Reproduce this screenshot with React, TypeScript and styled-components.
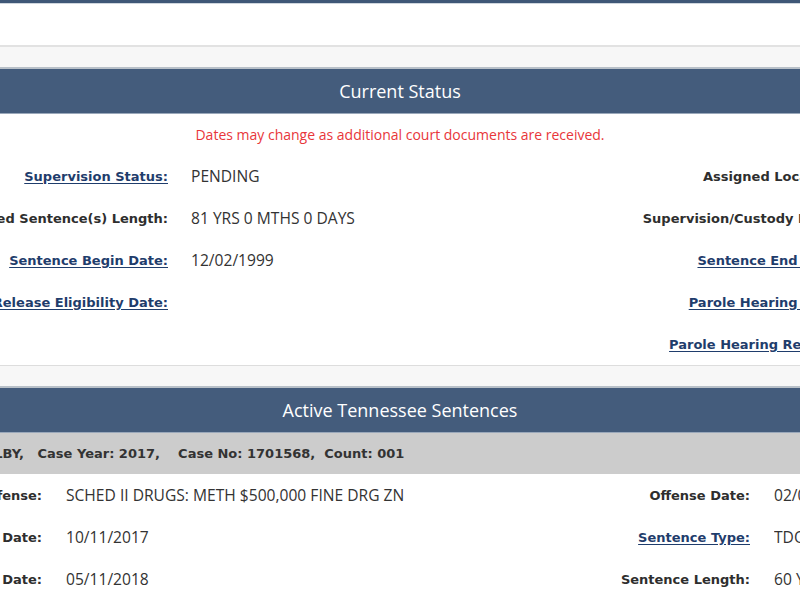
import React from 'react';
import styled, {createGlobalStyle} from 'styled-components';

const GlobalStyle = createGlobalStyle`
  html, body {
    margin: 0;
    padding: 0;
    overflow: hidden;
    background: #f7f7f7;
  }
`;

const Page = styled.div`
  width: 1348px;
  margin-left: calc(50% - 674px);
  display: flex;
  flex-direction: column;
  gap: 20px;
`;

const TopPanel = styled.div`
  height: 42px;
  background: #fff;
  border-top: 3px solid #3f5777;
  border-bottom: 2px solid #e2e2e2;
  box-shadow: inset 0 1px 0 #cfd6de;
`;

const Panel = styled.section`
  background: #fff;
  border-top: 2px solid #b8c0c8;
  border-bottom: 1px solid #dddddd;
`;

const PanelHeader = styled.h2`
  margin: 0;
  height: 44px;
  display: flex;
  align-items: center;
  justify-content: center;
  background: #445c7c;
  border-bottom: 1px solid #9aa8ba;
  color: #fff;
  font-family: "Open Sans", sans-serif;
  font-size: 18px;
  font-weight: 400;
`;

const Note = styled.div`
  height: 41px;
  display: flex;
  align-items: center;
  justify-content: center;
  color: #e8363a;
  font-family: "Open Sans", sans-serif;
  font-size: 14px;
`;

const CaseBand = styled.div`
  height: 41px;
  display: flex;
  align-items: center;
  padding-left: 96px;
  background: #cccccc;
  color: #333;
  font-family: "DejaVu Sans", sans-serif;
  font-size: 13px;
  font-weight: 700;
  white-space: pre;
`;

const Row = styled.div<{ $cols: string }>`
  display: grid;
  grid-template-columns: ${p => p.$cols};
  height: 42px;
  align-items: center;
`;

const Label = styled.div<{ $gap: number }>`
  text-align: right;
  padding-right: ${p => p.$gap}px;
  color: #2e2e2e;
  font-family: "DejaVu Sans", sans-serif;
  font-size: 13px;
  font-weight: 700;
  white-space: nowrap;
  overflow: hidden;
  direction: rtl;
`;

const LabelText = styled.span`
  direction: ltr;
  unicode-bidi: isolate;
`;

const LabelLink = styled.a`
  direction: ltr;
  unicode-bidi: isolate;
  color: #1f3d6c;
  text-decoration: underline;
  text-underline-offset: 2px;
  cursor: pointer;
`;

const Value = styled.div`
  color: #333;
  font-family: "Open Sans", sans-serif;
  font-size: 15.6px;
  white-space: nowrap;
  overflow: hidden;
`;

type Field = { label: string; value?: string; link?: boolean };

const statusRows: [Field | null, Field][] = [
    [{label: 'Supervision Status:', value: 'PENDING', link: true}, {label: 'Assigned Location:', value: 'SHELBY COUNTY'}],
    [{label: 'Total Imposed Sentence(s) Length:', value: '81 YRS 0 MTHS 0 DAYS'}, {label: 'Supervision/Custody Level:', value: 'MINIMUM'}],
    [{label: 'Sentence Begin Date:', value: '12/02/1999', link: true}, {label: 'Sentence End Date:', value: '', link: true}],
    [{label: 'Release Eligibility Date:', value: '', link: true}, {label: 'Parole Hearing Date:', value: '', link: true}],
    [null, {label: 'Parole Hearing Results:', value: '', link: true}],
];

const sentenceRows: [Field, Field][] = [
    [{label: 'Offense:', value: 'SCHED II DRUGS: METH $500,000 FINE DRG ZN'}, {label: 'Offense Date:', value: '02/01/2017'}],
    [{label: 'Sentence Imposed Date:', value: '10/11/2017'}, {label: 'Sentence Type:', value: 'TDOC', link: true}],
    [{label: 'Sentence Effective Date:', value: '05/11/2018'}, {label: 'Sentence Length:', value: '60 YRS 0 MTHS 0 DAYS'}],
];

function Cell({field, gap}: { field: Field | null; gap: number }) {
    if (!field) return <><Label $gap={gap}/><Value/></>;
    return (
        <>
            <Label $gap={gap}>
                {field.link ? <LabelLink>{field.label}</LabelLink> : <LabelText>{field.label}</LabelText>}
            </Label>
            <Value>{field.value}</Value>
        </>
    );
}

function App() {
    return (
        <>
            <GlobalStyle/>
            <Page>
                <TopPanel/>
                <Panel>
                    <PanelHeader>Current Status</PanelHeader>
                    <Note>Dates may change as additional court documents are received.</Note>
                    {statusRows.map(([left, right], i) => (
                        <Row key={i} $cols="465px 209px 465px 209px">
                            <Cell field={left} gap={23}/>
                            <Cell field={right} gap={23}/>
                        </Row>
                    ))}
                </Panel>
                <Panel>
                    <PanelHeader>Active Tennessee Sentences</PanelHeader>
                    <CaseBand>{'Conviction County: SHELBY,   Case Year: 2017,    Case No: 1701568,  Count: 001'}</CaseBand>
                    {sentenceRows.map(([left, right], i) => (
                        <Row key={i} $cols="340px 488px 220px 300px">
                            <Cell field={left} gap={24}/>
                            <Cell field={right} gap={24}/>
                        </Row>
                    ))}
                </Panel>
            </Page>
        </>
    );
}

export default App;
